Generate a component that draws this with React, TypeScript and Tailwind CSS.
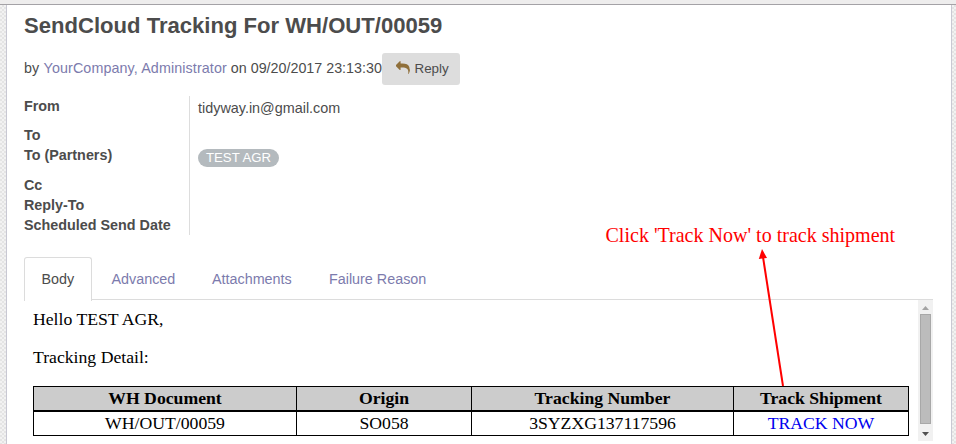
const fields = [
  { label: "From", height: "h-[29px]" },
  { label: "To", height: "h-5" },
  { label: "To (Partners)", height: "h-[30px]" },
  { label: "Cc", height: "h-5" },
  { label: "Reply-To", height: "h-5" },
  { label: "Scheduled Send Date", height: "h-5" },
];

const checker =
  "bg-[#ebebeb] bg-[conic-gradient(#e4e4e4_25%,#f2f2f2_0_50%,#e4e4e4_0_75%,#f2f2f2_0)] bg-[length:4px_4px]";

function ReplyIcon() {
  return (
    <svg className="mr-[5px] size-[14px] -translate-y-px text-[#8f6f3a]" viewBox="0 0 1792 1792" fill="currentColor">
      <path d="M1792 1120q0 166-127 451-3 7-10.5 24t-13.5 30-13 22q-12 17-28 17-15 0-23.5-10t-8.5-25q0-9 2.5-26.5t2.5-23.5q5-68 5-123 0-112-19.5-200.5t-54-153.5-89-112-116.5-76.5-144-47-164-22.5-180-6h-224v256q0 26-19 45t-45 19-45-19l-512-512q-19-19-19-45t19-45l512-512q19-19 45-19t45 19 19 45v256h224q713 0 875 403 53 134 53 333z" />
    </svg>
  );
}

function Tabs() {
  return (
    <nav className="flex h-[43px] w-[909px] border-b border-[#dcdcdc] text-[14.35px] leading-[44px] text-[#7c7bad]">
      <div className="h-[44px] w-[68px] shrink-0 rounded-t-[3px] border border-b-0 border-[#dcdcdc] bg-white pl-[16.5px] leading-[42px] text-[#4c4c4c]">
        Body
      </div>
      <a className="w-[101px] pl-[19.5px]">Advanced</a>
      <a className="w-[117px] pl-[19px]">Attachments</a>
      <a className="pl-[19px]">Failure Reason</a>
    </nav>
  );
}

function Scrollbar() {
  return (
    <div className="flex h-[141px] w-[15px] flex-col items-center bg-[#f1f1f1]">
      <svg className="h-[14px] w-[15px]" viewBox="0 0 15 14">
        <path d="M4 10L7.5 6L11 10Z" fill="#a3a3a3" />
      </svg>
      <div className="h-[110px] w-[11px] border border-[#a8a8a8] bg-[#bcbcbc]" />
      <svg className="h-[17px] w-[15px]" viewBox="0 0 15 17">
        <path d="M4 8L7.5 12L11 8Z" fill="#505050" />
      </svg>
    </div>
  );
}

export default function App() {
  return (
    <div className="relative flex h-[444px] w-[956px] flex-col overflow-hidden font-['Liberation_Sans',Arial,sans-serif] text-[#4c4c4c]">
      <div className="h-[5px] shrink-0 border-b border-[#a4a2a6] bg-[#eeeded]" />
      <div className={`h-[439px] pl-[6px] pr-1 ${checker}`}>
        <main className="h-full border-x border-[#c8c8d3] bg-white pl-[17px]">
          <h1 className="h-[48px] whitespace-nowrap pt-[7px] text-[22.08px] font-bold leading-[28px]">
            SendCloud Tracking For WH/OUT/00059
          </h1>
          <div className="flex h-8 whitespace-nowrap text-[14.3px] leading-[31px]">
            <span className="w-[358px]">
              by <a className="ml-[0.5px] tracking-[0.11px] text-[#7c7bad]">YourCompany, Administrator</a> on 09/20/2017 23:13:30
            </span>
            <button className="flex h-8 w-[78px] items-center rounded-[3px] bg-[#dddddd] pl-[13.5px] text-[13.4px]">
              <ReplyIcon />
              <span className="-translate-y-px">Reply</span>
            </button>
          </div>
          <div className="mt-[11px] flex h-[139px] text-[14.4px]">
            <div className="w-[166px] border-r border-[#dddddd] text-[14.35px] font-bold leading-5">
              {fields.map((f) => (
                <div key={f.label} className={f.height}>{f.label}</div>
              ))}
            </div>
            <div className="pl-2">
              <div className="h-[53px] pt-[2px] leading-5">tidyway.in@gmail.com</div>
              <div className="h-[18px] w-[81px] rounded-full bg-[#b4babe] pl-2 text-[13.2px] leading-[18px] text-white">
                TEST AGR
              </div>
            </div>
          </div>
          <div className="h-[22px]" />
          <Tabs />
          <div className="flex h-[141px] w-[909px] justify-between">
            <section className="ml-[9px] w-[876px] font-['Liberation_Serif',serif] text-[17.7px] text-black">
              <p className="h-[38px] pt-[9px] leading-5">Hello TEST AGR,</p>
              <p className="h-[48px] pt-[9px] leading-5">Tracking Detail:</p>
              <table className="w-[876px] table-fixed border-collapse border border-black text-center leading-[22px]">
                <colgroup>
                  <col className="w-[263px]" />
                  <col className="w-[175px]" />
                  <col className="w-[262px]" />
                  <col className="w-[175px]" />
                </colgroup>
                <thead className="border-b-2 border-black bg-[#cccccc]">
                  <tr className="h-[24px]">
                    {["WH Document", "Origin", "Tracking Number", "Track Shipment"].map((h) => (
                      <th key={h} className="border-x border-black p-0">{h}</th>
                    ))}
                  </tr>
                </thead>
                <tbody>
                  <tr className="h-[25px]">
                    <td className="border-x border-black p-0">WH/OUT/00059</td>
                    <td className="border-x border-black p-0">SO058</td>
                    <td className="border-x border-black p-0">3SYZXG137117596</td>
                    <td className="border-x border-black p-0 text-[#0000ee]">TRACK NOW</td>
                  </tr>
                </tbody>
              </table>
            </section>
            <Scrollbar />
          </div>
        </main>
      </div>
      <div className="absolute left-[605.5px] top-[223px] whitespace-nowrap font-['Liberation_Serif',serif] text-[20.05px] leading-6 text-[#ff0000]">
        Click 'Track Now' to track shipment
      </div>
      <svg className="absolute left-[750px] top-[245px]" width="45" height="142" viewBox="750 245 45 142">
        <path d="M763 257L783 386" stroke="#ff0000" strokeWidth="2" />
        <path d="M762 249L758.8 259L767 258Z" fill="#ff0000" />
      </svg>
    </div>
  );
}
